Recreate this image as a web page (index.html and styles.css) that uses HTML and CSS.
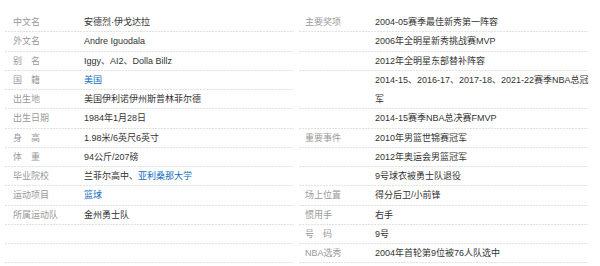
FILE: index.html
```html
<!DOCTYPE html>
<html>
	<head>
		<meta charset="utf-8">
		<title>安德烈·伊戈达拉</title>
		<link rel="stylesheet" href="styles.css">
	</head>
	<body>
		<div class="basic-info">
			<div class="col col-left">
				<div class="item"><span class="name">中文名</span><span class="value">安德烈·伊戈达拉</span></div>
				<div class="item"><span class="name">外文名</span><span class="value">Andre Iguodala</span></div>
				<div class="item"><span class="name">别　名</span><span class="value">Iggy、AI2、Dolla Billz</span></div>
				<div class="item"><span class="name">国　籍</span><span class="value"><a href="javascript:;">美国</a></span></div>
				<div class="item"><span class="name">出生地</span><span class="value">美国伊利诺伊州斯普林菲尔德</span></div>
				<div class="item"><span class="name">出生日期</span><span class="value">1984年1月28日</span></div>
				<div class="item"><span class="name">身　高</span><span class="value">1.98米/6英尺6英寸</span></div>
				<div class="item"><span class="name">体　重</span><span class="value">94公斤/207磅</span></div>
				<div class="item"><span class="name">毕业院校</span><span class="value">兰菲尔高中、<a href="javascript:;">亚利桑那大学</a></span></div>
				<div class="item"><span class="name">运动项目</span><span class="value"><a href="javascript:;">篮球</a></span></div>
				<div class="item"><span class="name">所属运动队</span><span class="value">金州勇士队</span></div>
				<div class="item"></div>
				<div class="item"></div>
			</div>
			<div class="col col-right">
				<div class="item"><span class="name">主要奖项</span><span class="value">2004-05赛季最佳新秀第一阵容</span></div>
				<div class="item"><span class="name"></span><span class="value">2006年全明星新秀挑战赛MVP</span></div>
				<div class="item"><span class="name"></span><span class="value">2012年全明星东部替补阵容</span></div>
				<div class="item item-2"><span class="name"></span><span class="value">2014-15、2016-17、2017-18、2021-22赛季NBA总冠<br>军</span></div>
				<div class="item"><span class="name"></span><span class="value">2014-15赛季NBA总决赛FMVP</span></div>
				<div class="item"><span class="name">重要事件</span><span class="value">2010年男篮世锦赛冠军</span></div>
				<div class="item"><span class="name"></span><span class="value">2012年奥运会男篮冠军</span></div>
				<div class="item"><span class="name"></span><span class="value">9号球衣被勇士队退役</span></div>
				<div class="item"><span class="name">场上位置</span><span class="value">得分后卫/小前锋</span></div>
				<div class="item"><span class="name">惯用手</span><span class="value">右手</span></div>
				<div class="item"><span class="name">号　码</span><span class="value">9号</span></div>
				<div class="item"><span class="name">NBA选秀</span><span class="value">2004年首轮第9位被76人队选中</span></div>
			</div>
		</div>
	</body>
</html>
```

FILE: styles.css
```css
* {
  padding: 0;
  margin: 0;
  border: 0;
  box-sizing: border-box;
}

body {
  background: #fff;
  font-family: "Liberation Sans", "Noto Sans CJK SC", sans-serif;
  font-size: 9px;
  color: #333;
}

.basic-info {
  display: flex;
  gap: 5px;
  padding: 13px 0 0 5px;
}

.col {
  width: 289px;
}

/* 每行底部虚线 */
.item {
  display: flex;
  height: 19.25px;
  line-height: 18.25px;
  background-image: repeating-linear-gradient(to right, #e2e2e2 0, #e2e2e2 2px, #fff 2px, #fff 3px);
  background-size: 100% 1px;
  background-position: left bottom;
  background-repeat: no-repeat;
}

.item-2 {
  height: 38.5px;
  line-height: 19px;
}

.name {
  flex: none;
  color: #999;
  white-space: nowrap;
}

.col-left .name {
  width: 79px;
  padding-left: 8px;
}

.col-right .name {
  width: 76px;
  padding-left: 6px;
}

.value {
  flex: 1;
  white-space: nowrap;
}

.item a {
  color: #136ec2;
  text-decoration: none;
}
```
